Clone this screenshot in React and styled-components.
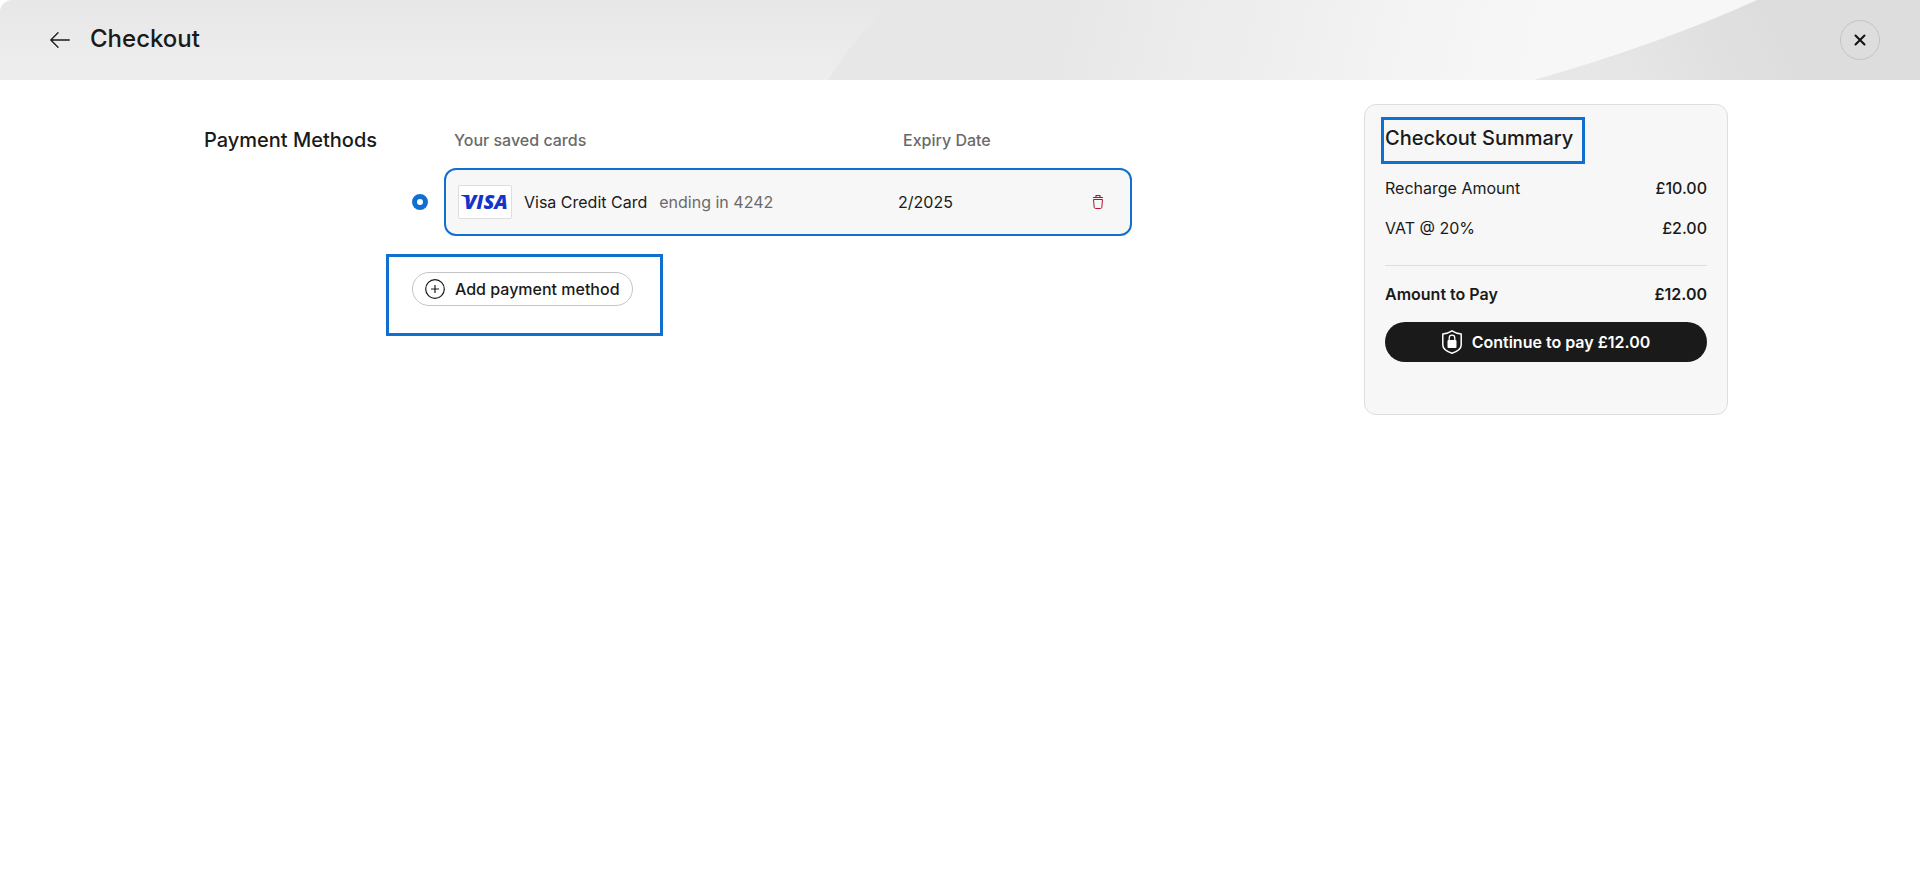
import React, { useState } from 'react';
import styled, { createGlobalStyle } from 'styled-components';

const summaryRows = [
    { label: 'Recharge Amount', value: '£10.00' },
    { label: 'VAT @ 20%', value: '£2.00' },
];

const savedCards = [
    { id: 'visa-4242', name: 'Visa Credit Card', ending: 'ending in 4242', expiry: '2/2025' },
];

const VisaLogo = () => (
    <svg width="52" height="30" viewBox="0 0 52 30" role="img" aria-label="Visa">
        <path d="M2 8h7.500l1.500 7C9 11.500 6 9.200 2 8.400z" fill="#1434cb" />
        <VisaWord x="5" y="22">VISA</VisaWord>
    </svg>
);

const TrashIcon = () => (
    <svg width="12" height="16" viewBox="0 0 12 16" fill="none" stroke="#b3122f" strokeLinejoin="round">
        <path d="M1 3.500h10M4 3V1.500h4V3" strokeWidth="1.200" />
        <path d="M1.500 5.500l.7 7.800q.2 1.200 1.400 1.200h4.800q1.200 0 1.400-1.200l.7-7.800z" />
    </svg>
);

const ShieldIcon = () => (
    <svg width="20" height="24" viewBox="0 0 20 24" fill="none" stroke="#fff">
        <path d="M10 .8C12.500 2.400 15.500 3.500 19.200 4v11c0 4-4 6.500-9.200 8.300C4.800 21.500.8 19 .8 15V4C4.500 3.500 7.500 2.400 10 .8z" strokeWidth="1.500" strokeLinejoin="round" />
        <path d="M7.200 10.500V8a2.800 2.800 0 0 1 5.600 0v2.500" strokeWidth="1.300" />
        <rect x="5.500" y="10" width="9" height="8" rx="1" fill="#fff" stroke="none" />
    </svg>
);

const App = () => {

    const [selected, setSelected] = useState('visa-4242');

    return (
        <>
            <GlobalStyle />
            <Header>
                <HeaderArt viewBox="0 0 1920 80" preserveAspectRatio="none" aria-hidden="true">
                    <defs>
                        <linearGradient id="left" x1="0" y1="0" x2="0" y2="1">
                            <stop offset="0" stopColor="#e7e7e7" />
                            <stop offset="1" stopColor="#eeeeee" />
                        </linearGradient>
                        <linearGradient id="middle" gradientUnits="userSpaceOnUse" x1="1060" y1="0" x2="1540" y2="120">
                            <stop offset="0" stopColor="#e7e7e7" />
                            <stop offset="0.4" stopColor="#eeeeee" />
                            <stop offset="0.85" stopColor="#f6f6f6" />
                            <stop offset="1" stopColor="#f7f7f7" />
                        </linearGradient>
                        <linearGradient id="right" gradientUnits="userSpaceOnUse" x1="1600" y1="80" x2="1760" y2="0">
                            <stop offset="0" stopColor="#e7e7e7" />
                            <stop offset="1" stopColor="#dddddd" />
                        </linearGradient>
                    </defs>
                    <rect width="1920" height="80" fill="url(#left)" />
                    <path d="M894 0Q852 40 828 80H1920V0z" fill="url(#middle)" />
                    <path d="M1757 0Q1660 44 1534 80H1920V0z" fill="url(#right)" />
                </HeaderArt>
                <IconButton aria-label="Back">
                    <svg width="20" height="16" viewBox="0 0 20 16" fill="none" stroke="#1a1a1a" strokeWidth="1.300" strokeLinecap="round" strokeLinejoin="round">
                        <path d="M19.300 8H1M8 .7L.8 8 8 15.300" />
                    </svg>
                </IconButton>
                <PageTitle>Checkout</PageTitle>
                <CloseButton aria-label="Close">
                    <svg width="12" height="12" viewBox="0 0 12 12" stroke="#111" strokeWidth="2" strokeLinecap="round">
                        <path d="M1.500 1.500l9 9M10.500 1.500l-9 9" />
                    </svg>
                </CloseButton>
            </Header>
            <Main>
                <Payment>
                    <SectionTitle>Payment Methods</SectionTitle>
                    <Methods>
                        <ColumnHeads>
                            <span>Your saved cards</span>
                            <span>Expiry Date</span>
                        </ColumnHeads>
                        {savedCards.map((card) => (
                            <CardRow key={card.id}>
                                <Radio
                                    id={card.id}
                                    name="card"
                                    checked={selected === card.id}
                                    onChange={() => setSelected(card.id)}
                                />
                                <SavedCard $selected={selected === card.id}>
                                    <CardLabel htmlFor={card.id}>
                                        <LogoBox><VisaLogo /></LogoBox>
                                        <span>{card.name}</span>
                                        <Ending>{card.ending}</Ending>
                                    </CardLabel>
                                    <span>{card.expiry}</span>
                                    <DeleteButton aria-label="Delete card"><TrashIcon /></DeleteButton>
                                </SavedCard>
                            </CardRow>
                        ))}
                        <Highlight $inset="-18px -30px -30px -26px">
                            <AddButton>
                                <svg width="20" height="20" viewBox="0 0 20 20" fill="none" stroke="#1a1a1a">
                                    <circle cx="10" cy="10" r="9.300" strokeWidth="1.200" />
                                    <path d="M10 6v8M6 10h8" strokeWidth="1.200" />
                                </svg>
                                Add payment method
                            </AddButton>
                        </Highlight>
                    </Methods>
                </Payment>
                <Summary>
                    <Highlight $inset="-9px -12px -14px -4px">
                        <SectionTitle>Checkout Summary</SectionTitle>
                    </Highlight>
                    <Rows>
                        {summaryRows.map((row) => (
                            <Row key={row.label}>
                                <dt>{row.label}</dt>
                                <Amount>{row.value}</Amount>
                            </Row>
                        ))}
                        <Row $total>
                            <dt>Amount to Pay</dt>
                            <Amount $total>£12.00</Amount>
                        </Row>
                    </Rows>
                    <PayButton>
                        <ShieldIcon />
                        Continue to pay £12.00
                    </PayButton>
                </Summary>
            </Main>
        </>
    )
};


export default App;

const GlobalStyle = createGlobalStyle`
* {
    box-sizing: border-box;
}

body {
    margin: 0;
    background: #fff;
    color: #1a1a1a;
    font-family: Inter, "Liberation Sans", sans-serif;
    font-size: 16px;
    line-height: 24px;
}

button {
    font: inherit;
    color: inherit;
    cursor: pointer;
}
`;

const Header = styled.header`
position: relative;
display: flex;
align-items: center;
height: 80px;
padding: 0 40px 0 48px;
overflow: hidden;
border-top-left-radius: 12px;
`;

const HeaderArt = styled.svg`
position: absolute;
inset: 0;
z-index: -1;
width: 100%;
height: 100%;
`;

const IconButton = styled.button`
display: flex;
align-items: center;
justify-content: center;
padding: 2px;
border: none;
background: none;
`;

const CloseButton = styled(IconButton)`
width: 40px;
height: 40px;
margin-left: auto;
border: 1px solid #c4c4c4;
border-radius: 50%;
`;

const PageTitle = styled.h1`
margin: 0 0 2px 18px;
font-size: 24px;
line-height: 32px;
font-weight: 500;
`;

const Main = styled.main`
display: flex;
align-items: flex-start;
justify-content: space-between;
gap: 32px;
padding: 24px 10%;
`;

const Payment = styled.section`
display: grid;
grid-template-columns: 208px 1fr;
flex: 1;
max-width: 940px;
padding: 24px 0 0 12px;
`;

const SectionTitle = styled.h2`
margin: 0;
font-size: 20px;
line-height: 24px;
font-weight: 500;
white-space: nowrap;
`;

const Methods = styled.div`
min-width: 0;
`;

const ColumnHeads = styled.div`
display: grid;
grid-template-columns: 449px 1fr;
padding-left: 42px;
color: #6a6a6a;
font-weight: 500;
`;

const CardRow = styled.div`
display: flex;
align-items: center;
gap: 16px;
margin-top: 16px;
`;

const Radio = styled.input.attrs({ type: 'radio' })`
appearance: none;
width: 16px;
height: 16px;
margin: 0;
border: 5px solid #1170cf;
border-radius: 50%;
background: #fff;
`;

const SavedCard = styled.div`
display: grid;
grid-template-columns: 440px 1fr auto;
align-items: center;
flex: 1;
height: 68px;
padding: 0 24px 0 12px;
border: 2px solid ${({ $selected }) => ($selected ? '#1170cf' : '#dedede')};
border-radius: 12px;
background: #f7f7f7;
`;

const CardLabel = styled.label`
display: flex;
align-items: center;
gap: 12px;
`;

const LogoBox = styled.span`
display: flex;
align-items: center;
justify-content: center;
width: 54px;
height: 34px;
border: 1px solid #dedede;
border-radius: 2px;
background: #fff;
`;

const VisaWord = styled.text`
fill: #1434cb;
font-family: "Open Sans", sans-serif;
font-size: 20px;
font-style: italic;
font-weight: 800;
`;

const Ending = styled.span`
color: #6a6a6a;
`;

const DeleteButton = styled(IconButton)`
padding: 0 2px;
`;

const Highlight = styled.div`
position: relative;
width: fit-content;

&::after {
    content: '';
    position: absolute;
    inset: ${({ $inset }) => $inset};
    border: 3px solid #1170cf;
    pointer-events: none;
}
`;

const AddButton = styled.button`
display: flex;
align-items: center;
gap: 10px;
height: 34px;
margin-top: 36px;
padding: 0 12px;
border: 1px solid #c4c4c4;
border-radius: 17px;
background: #fff;
font-weight: 500;
`;

const Summary = styled.aside`
flex: none;
width: 364px;
padding: 21px 20px 52px;
border: 1px solid #dedede;
border-radius: 12px;
background: #f7f7f7;
`;

const Rows = styled.dl`
margin: 26px 0 0;
`;

const Row = styled.div`
display: flex;
justify-content: space-between;
margin-bottom: 16px;

${({ $total }) => $total && `
    margin-top: 25px;
    padding-top: 16px;
    border-top: 1px solid #dedede;
    font-weight: 600;
`}
`;

const Amount = styled.dd`
margin: 0;
font-weight: ${({ $total }) => ($total ? 600 : 500)};
`;

const PayButton = styled.button`
display: flex;
align-items: center;
justify-content: center;
gap: 10px;
width: 100%;
height: 40px;
border: none;
border-radius: 20px;
background: #1a1a1a;
color: #fff;
font-weight: 600;
`;
